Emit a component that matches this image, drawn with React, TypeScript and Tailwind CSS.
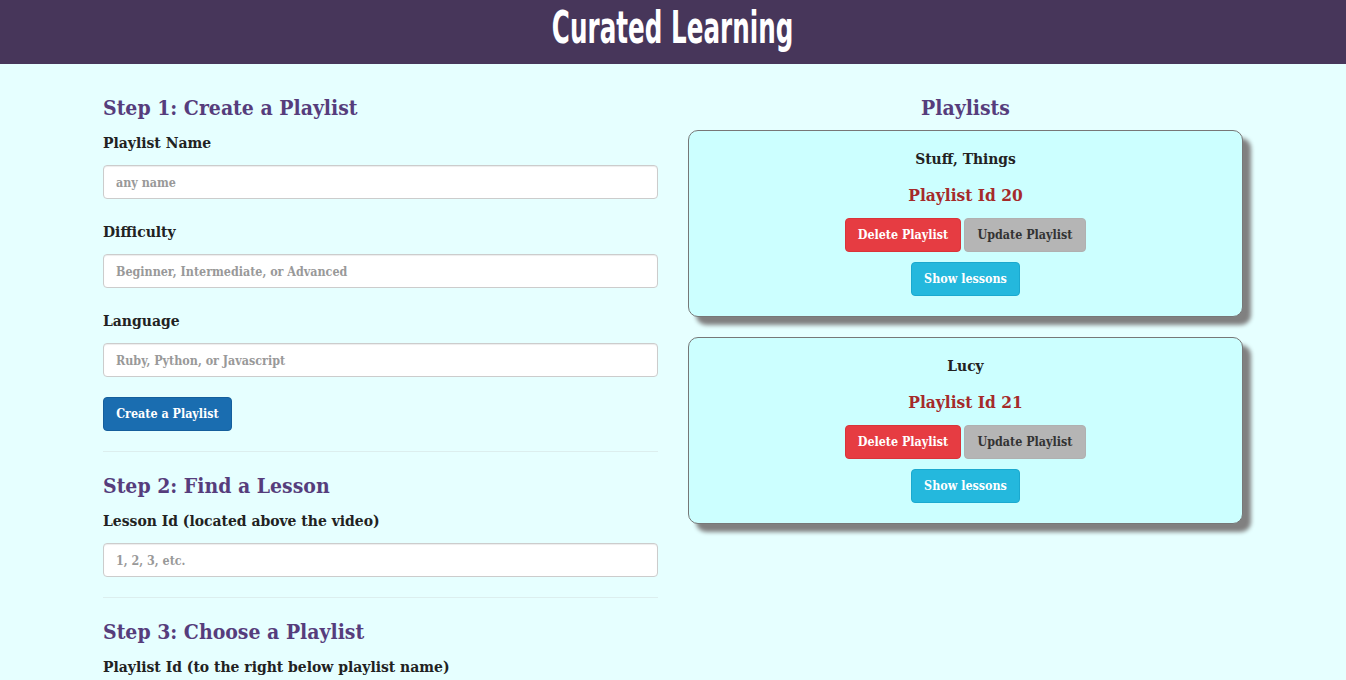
import React from "react";

const slab = "font-['DejaVu_Serif_Condensed','DejaVu_Serif',serif]";

function Field({ label, placeholder, last }: { label: string; placeholder: string; last?: boolean }) {
  return (
    <div className={last ? "mb-[20px]" : "mb-[22px]"}>
      <label className="block text-[15.5px] leading-[22px] font-bold text-[#222] mb-[11px]">{label}</label>
      <input
        className="block w-full h-[34px] rounded-[4px] border border-[#ccc] bg-white px-[12px] text-[12.4px] font-bold placeholder:text-[#999] shadow-[inset_0_1px_1px_rgba(0,0,0,0.075)]"
        placeholder={placeholder}
      />
    </div>
  );
}

function StepTitle({ children, top }: { children: React.ReactNode; top: string }) {
  return <h3 className={`${top} mb-[11px] text-[21px] leading-[26px] font-bold text-[#563d7c]`}>{children}</h3>;
}

function PlaylistCard({ name, id }: { name: string; id: number }) {
  return (
    <div className="mb-[20px] rounded-[10px] border border-[#777] bg-[#ccffff] pt-[17px] pb-[20px] flex flex-col items-center shadow-[8px_8px_4px_#808080]">
      <div className="text-[15.4px] leading-[22px] font-bold text-[#222]">{name}</div>
      <div className="mt-[13px] text-[17.2px] leading-[24px] font-bold text-[#a52a2a]">Playlist Id {id}</div>
      <div className="mt-[11px] flex gap-[3px]">
        <button className="w-[116px] h-[34px] rounded-[4px] bg-[#e63c42] border border-[#d9343a] text-white text-[12.4px] font-bold">
          Delete Playlist
        </button>
        <button className="w-[122px] h-[34px] rounded-[4px] bg-[#b5b5b5] border border-[#b0b0b0] text-[#333] text-[12.4px] font-bold">
          Update Playlist
        </button>
      </div>
      <button className="mt-[10px] w-[109px] h-[34px] rounded-[4px] bg-[#24b8dd] border border-[#1ba9cf] text-white text-[12.4px] font-bold">
        Show lessons
      </button>
    </div>
  );
}

export default function App() {
  return (
    <div className={`min-h-screen bg-[#e6ffff] ${slab}`}>
      <header className="h-[64px] bg-[#47365a] flex justify-center">
        <h1 className="mt-[3px] text-[44px] leading-[50px] font-bold text-white font-['DejaVu_Sans',sans-serif] scale-x-[0.56]">
          Curated Learning
        </h1>
      </header>
      <div className="w-[1170px] mx-auto px-[15px] flex gap-[30px]">
        <div className="w-[555px]">
          <StepTitle top="mt-[31px]">Step 1: Create a Playlist</StepTitle>
          <Field label="Playlist Name" placeholder="any name" />
          <Field label="Difficulty" placeholder="Beginner, Intermediate, or Advanced" />
          <Field label="Language" placeholder="Ruby, Python, or Javascript" last />
          <button className="w-[129px] h-[34px] rounded-[4px] bg-[#1a6db0] border border-[#155f9c] text-white text-[12.4px] font-bold">
            Create a Playlist
          </button>
          <hr className="mt-[20px] border-t border-[#dceeee]" />
          <StepTitle top="mt-[21px]">Step 2: Find a Lesson</StepTitle>
          <Field label="Lesson Id (located above the video)" placeholder="1, 2, 3, etc." last />
          <hr className="border-t border-[#dceeee]" />
          <StepTitle top="mt-[21px]">Step 3: Choose a Playlist</StepTitle>
          <Field label="Playlist Id (to the right below playlist name)" placeholder="" />
        </div>
        <div className="w-[555px]">
          <h3 className="mt-[31px] mb-[9px] text-center text-[21px] leading-[26px] font-bold text-[#563d7c]">Playlists</h3>
          <PlaylistCard name="Stuff, Things" id={20} />
          <PlaylistCard name="Lucy" id={21} />
        </div>
      </div>
    </div>
  );
}
